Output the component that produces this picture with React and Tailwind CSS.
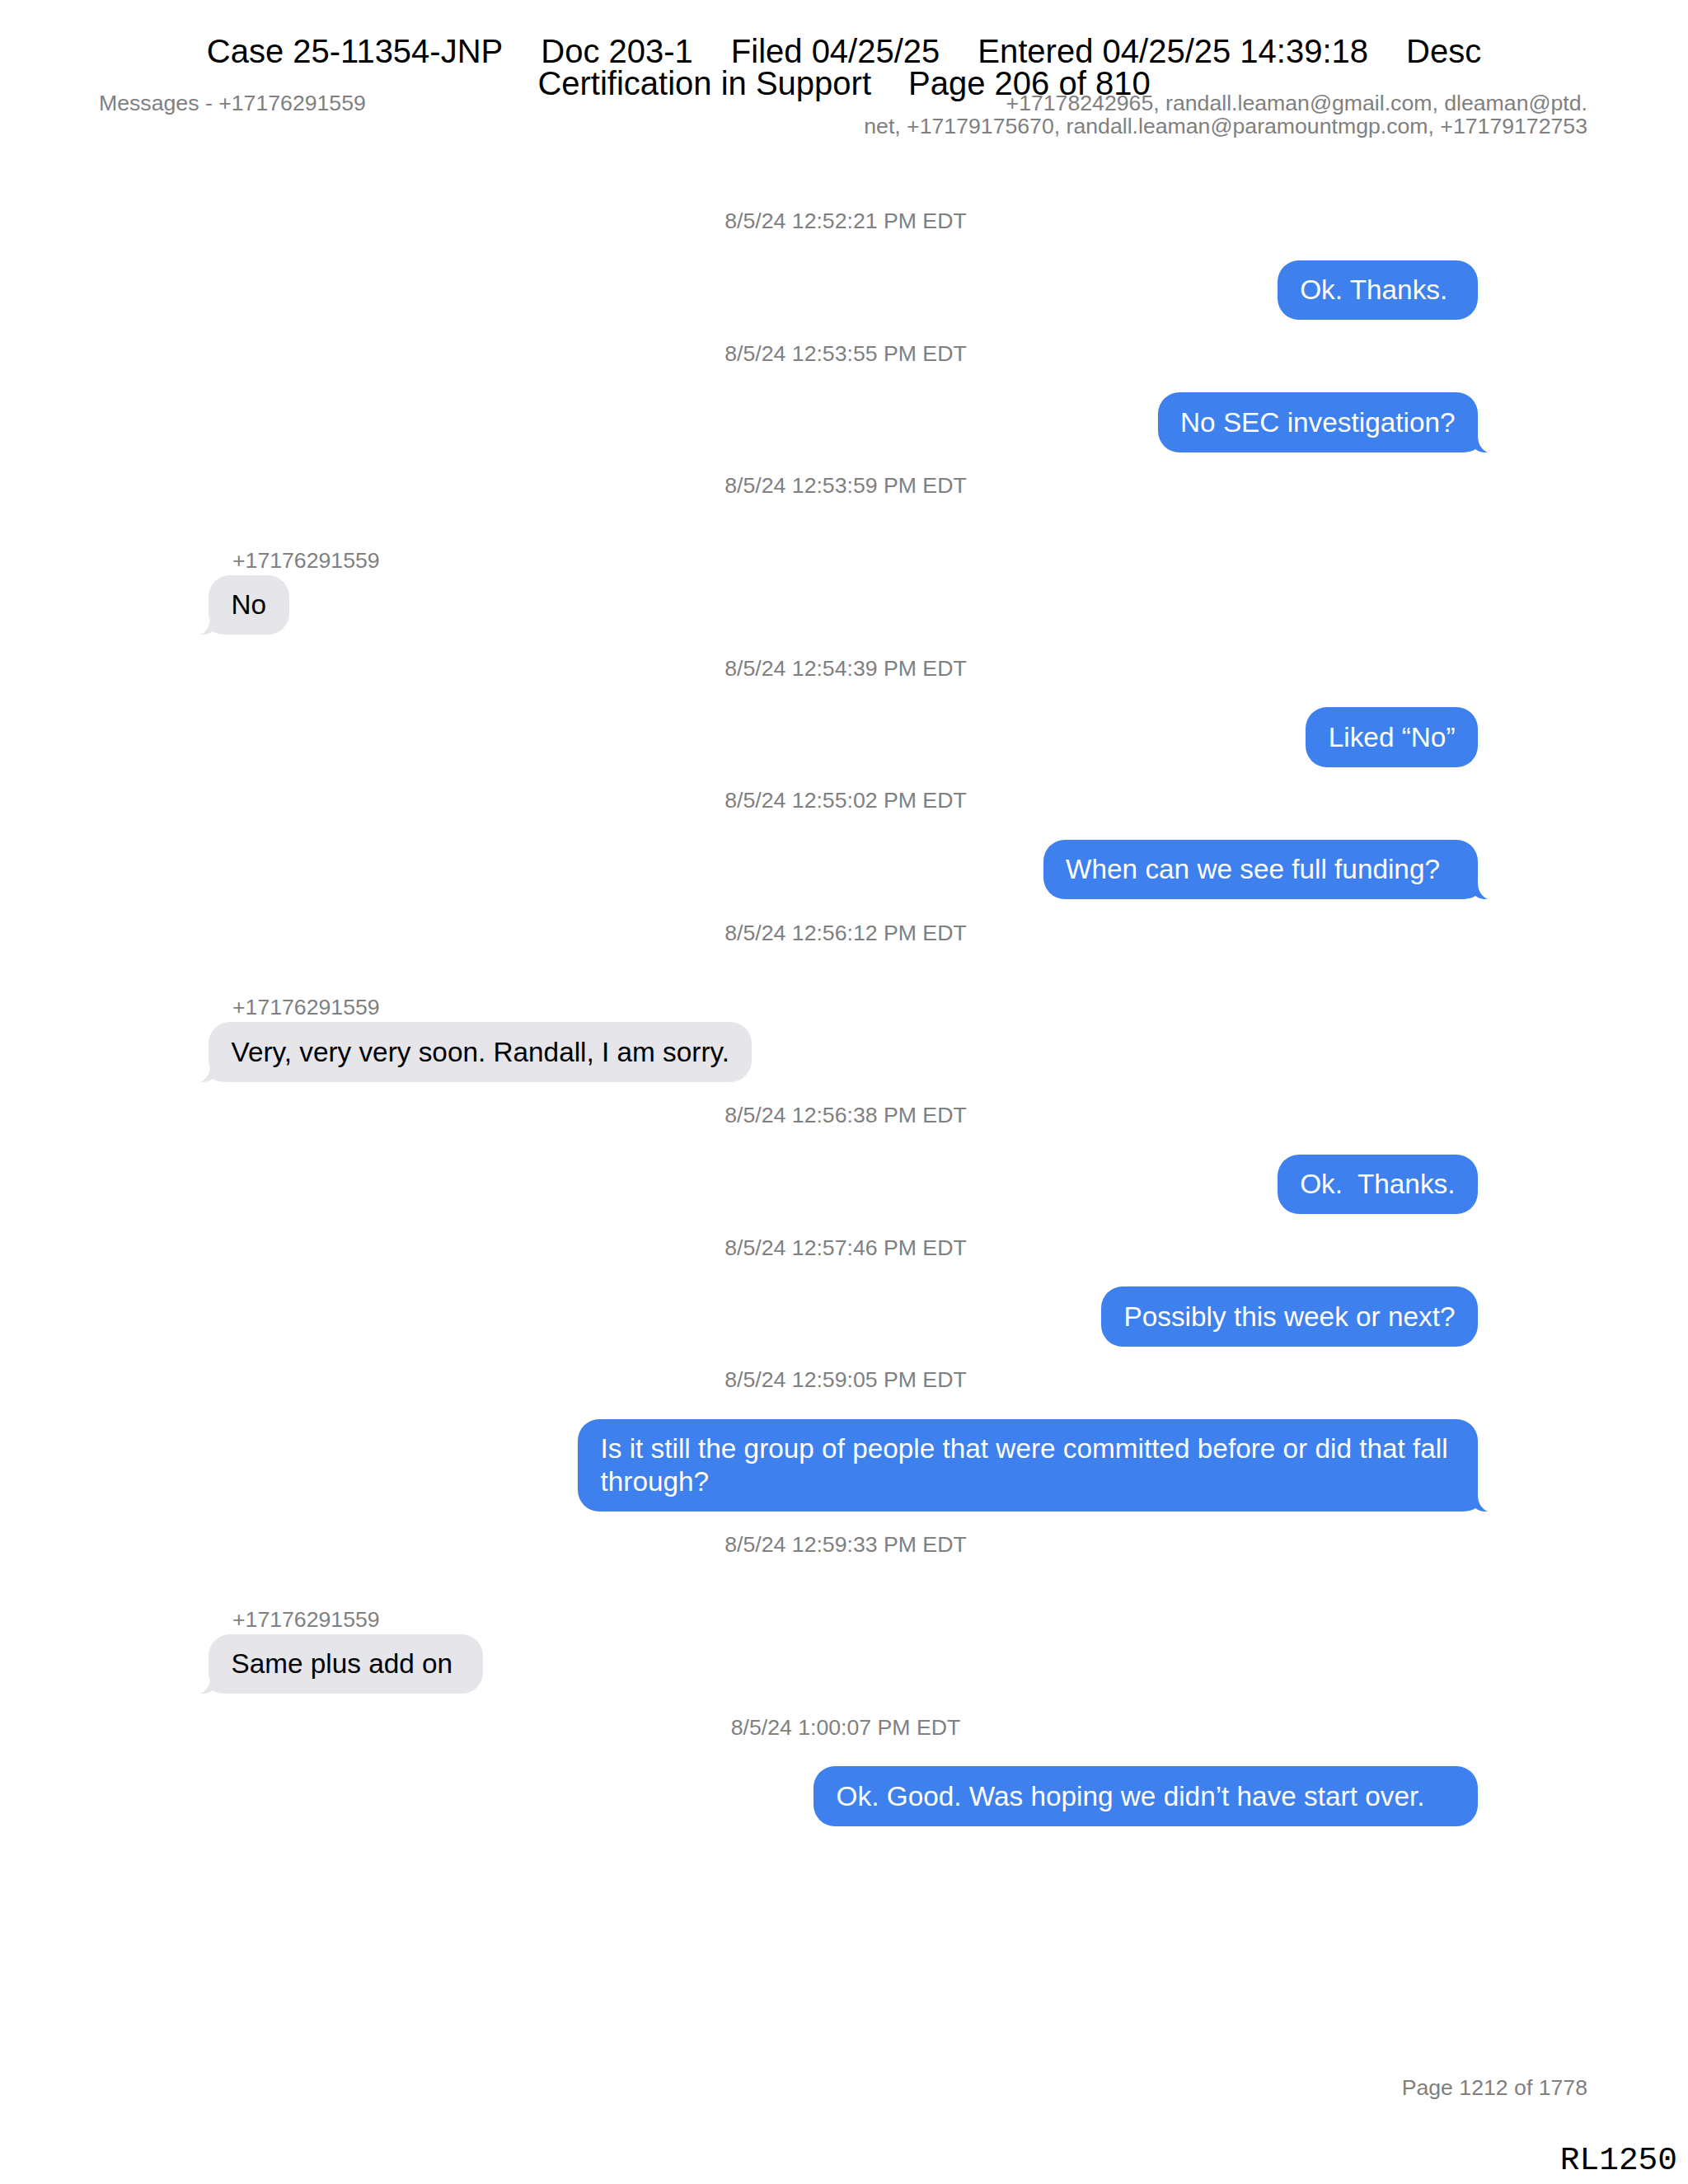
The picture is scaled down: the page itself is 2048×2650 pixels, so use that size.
const SENDER = "+17176291559";

const messages = [
  { ts: "8/5/24 12:52:21 PM EDT", me: true, text: "Ok. Thanks.\u00A0" },
  { ts: "8/5/24 12:53:55 PM EDT", me: true, text: "No SEC investigation?", tail: true },
  { ts: "8/5/24 12:53:59 PM EDT", me: false, text: "No", tail: true },
  { ts: "8/5/24 12:54:39 PM EDT", me: true, text: "Liked “No”" },
  { ts: "8/5/24 12:55:02 PM EDT", me: true, text: "When can we see full funding?\u00A0\u00A0", tail: true },
  { ts: "8/5/24 12:56:12 PM EDT", me: false, text: "Very, very very soon. Randall, I am sorry.", tail: true },
  { ts: "8/5/24 12:56:38 PM EDT", me: true, text: "Ok.\u00A0 Thanks." },
  { ts: "8/5/24 12:57:46 PM EDT", me: true, text: "Possibly this week or next?" },
  {
    ts: "8/5/24 12:59:05 PM EDT",
    me: true,
    text: "Is it still the group of people that were committed before or did that fall through?",
    tail: true,
  },
  { ts: "8/5/24 12:59:33 PM EDT", me: false, text: "Same plus add on\u00A0", tail: true },
  { ts: "8/5/24 1:00:07 PM EDT", me: true, text: "Ok. Good. Was hoping we didn’t have start over.\u00A0\u00A0\u00A0\u00A0" },
];

// bubble corner + tail, drawn for the bottom-right corner; mirrored for incoming
const Tail = ({ color, left }) => (
  <svg
    width="38"
    height="32"
    viewBox="0 0 38 32"
    className={
      left
        ? "absolute bottom-0 left-[-10px] -scale-x-100"
        : "absolute bottom-0 right-[-12px]"
    }
  >
    <path
      d="M0 0 L26 0 L26 12 C26 22 31 29 38 32 C32 32.5 27 31 23 28 C19 31 12 32 4 32 L0 32 Z"
      fill={color}
    />
  </svg>
);

const Bubble = ({ me, text, tail }) => (
  <div className={me ? "flex justify-end" : "flex justify-start"}>
    <div
      className={
        me
          ? "relative max-w-[1092px] rounded-[26px] bg-[#3d80ee] px-[27.5px] py-[16.5px] text-[33.33px] leading-[39.5px] text-white"
          : "relative max-w-[1092px] rounded-[26px] bg-[#e5e5ea] px-[27.5px] py-[16.5px] text-[33.33px] leading-[39.5px] text-black"
      }
    >
      {tail && <Tail color={me ? "#3d80ee" : "#e5e5ea"} left={!me} />}
      <span className="relative">{text}</span>
    </div>
  </div>
);

export default function App() {
  return (
    <div className="relative flex h-[2650px] w-[2048px] flex-col bg-white font-['Liberation_Sans',Arial,sans-serif]">
      {/* court filing stamp over the page */}
      <div className="absolute left-0 right-0 top-[43px] text-[40px] leading-[39px] text-black">
        <div className="flex justify-center gap-[46px]">
          <span>Case 25-11354-JNP</span>
          <span>Doc 203-1</span>
          <span>Filed 04/25/25</span>
          <span>Entered 04/25/25 14:39:18</span>
          <span>Desc</span>
        </div>
        <div className="flex justify-center gap-[45px]">
          <span>Certification in Support</span>
          <span>Page 206 of 810</span>
        </div>
      </div>

      <header className="flex justify-between pl-[120px] pr-[122px] pt-[111px] text-[26.67px] leading-[28px] text-[#808080]">
        <div>Messages - {SENDER}</div>
        <div className="text-right">
          <div>+17178242965, randall.leaman@gmail.com, dleaman@ptd.</div>
          <div>net, +17179175670, randall.leaman@paramountmgp.com, +17179172753</div>
        </div>
      </header>

      <main className="flex flex-col pl-[253px] pr-[255px] pt-[86px]">
        {messages.map((m, i) => (
          <div key={i} className="flex flex-col">
            <div
              className={
                i === 0
                  ? "pl-[6px] text-center text-[26.67px] leading-[30px] text-[#808080]"
                  : "mt-[25.5px] pl-[6px] text-center text-[26.67px] leading-[30px] text-[#808080]"
              }
            >
              {m.ts}
            </div>
            {!m.me && (
              <div className="mt-[60.5px] pl-[29px] text-[26.67px] leading-[30px] text-[#808080]">
                {SENDER}
              </div>
            )}
            <div className={m.me ? "mt-[32.5px]" : "mt-[3px]"}>
              <Bubble me={m.me} text={m.text} tail={m.tail} />
            </div>
          </div>
        ))}
      </main>

      <div className="flex-1" />

      <footer className="flex flex-col">
        <div className="pr-[122px] text-right text-[26.67px] leading-[30px] text-[#808080]">
          Page 1212 of 1778
        </div>
        <div className="mb-[8px] mt-[54px] pr-[13px] text-right font-['Liberation_Mono','Courier_New',monospace] text-[39.5px] leading-[40px] text-black">
          RL1250
        </div>
      </footer>
    </div>
  );
}
